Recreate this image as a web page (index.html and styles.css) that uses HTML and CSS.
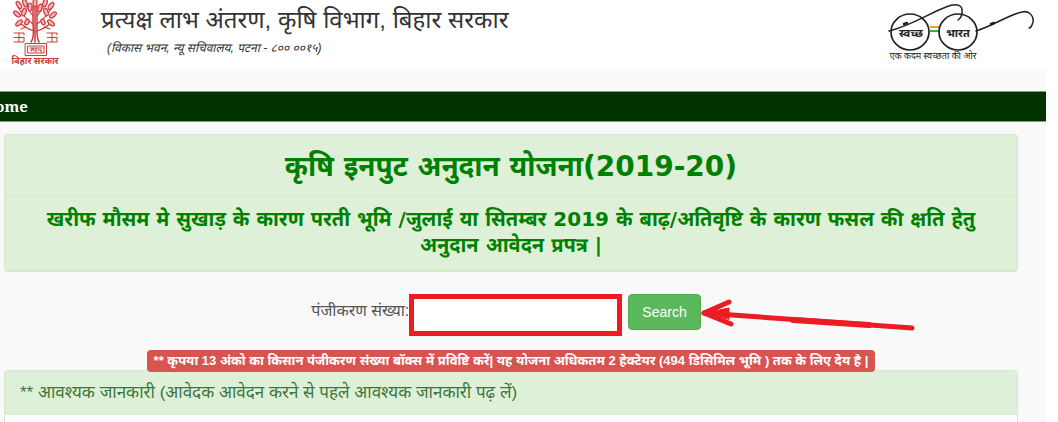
FILE: index.html
```html
<!DOCTYPE html>
<html lang="hi">

<head>
    <meta charset="UTF-8" />
    <title>प्रत्यक्ष लाभ अंतरण, कृषि विभाग, बिहार सरकार</title>
    <link rel="stylesheet" href="styles.css">
</head>

<body>

    <div class="page">
        <header class="header">
            <svg class="emblem" width="50" height="69" viewBox="0 0 50 69" role="img" aria-label="बिहार सरकार">
                <g fill="none" stroke="#cf3a3a" stroke-linecap="round">
                    <path d="M20 42C24 37 22 29 22 22V6M28 42C25 37 26 29 26 22V6M24 42V4" stroke-width="1.500" />
                    <path d="M23 31C17 29 12 26 8 22M22 24C16 20 11 14 7 7M22 16C18 11 15 6 14 0M26 31C32 29 37 26 41 22M26 24C32 20 37 14 41 7M26 16C30 11 33 6 34 0M15 27L10 29M33 27L39 29" stroke-width="1.200" />
                    <path d="M3 33H8V42H3M3 37.500H13M8 42H13V38M8 33H13V35M36 33H41V42H36M36 37.500H46M41 42H46V38M41 33H46V35" stroke-width="1" />
                    <path d="M14.500 43.500H35.500V55.500H14.500ZM17 46H33V53H17Z" stroke-width="1" />
                    <path d="M19 48H31M20 51C21 48 23 49 23 51M25 48V52M27 50H30V52" stroke-width="1.200" />
                </g>
                <g fill="#f3b5b5" stroke="#cf3a3a" stroke-width="1.200">
                    <ellipse cx="8" cy="5" rx="2" ry="4" transform="rotate(-35 8 5)" />
                    <ellipse cx="6" cy="14" rx="2" ry="4" transform="rotate(-50 6 14)" />
                    <ellipse cx="8" cy="23" rx="2" ry="4" transform="rotate(50 8 23)" />
                    <ellipse cx="14" cy="3" rx="2" ry="4" transform="rotate(-20 14 3)" />
                    <ellipse cx="13" cy="12" rx="2" ry="4" transform="rotate(20 13 12)" />
                    <ellipse cx="16" cy="22" rx="2" ry="3" transform="rotate(25 16 22)" />
                    <ellipse cx="19" cy="7" rx="2" ry="4" />
                    <ellipse cx="24" cy="3" rx="2" ry="4" />
                    <ellipse cx="29" cy="8" rx="2" ry="4" transform="rotate(15 29 8)" />
                    <ellipse cx="34" cy="3" rx="2" ry="4" transform="rotate(20 34 3)" />
                    <ellipse cx="35" cy="12" rx="2" ry="4" transform="rotate(-20 35 12)" />
                    <ellipse cx="32" cy="22" rx="2" ry="3" transform="rotate(-25 32 22)" />
                    <ellipse cx="40" cy="6" rx="2" ry="4" transform="rotate(35 40 6)" />
                    <ellipse cx="42" cy="15" rx="2" ry="4" transform="rotate(50 42 15)" />
                    <ellipse cx="40" cy="23" rx="2" ry="4" transform="rotate(-50 40 23)" />
                </g>
                <text class="emblem-text" x="24" y="64" text-anchor="middle">बिहार सरकार</text>
            </svg>

            <div class="titles">
                <h1 class="site-title">प्रत्यक्ष लाभ अंतरण, कृषि विभाग, बिहार सरकार</h1>
                <p class="address">(विकास भवन, न्यू सचिवालय, पटना - ८०० ००१५)</p>
            </div>

            <svg class="glasses" width="154" height="66" viewBox="0 0 154 66" role="img" aria-label="स्वच्छ भारत">
                <path d="M50 27H59" stroke="#e3a52b" stroke-width="2" />
                <path d="M50 31H59" stroke="#3fae49" stroke-width="2" />
                <g fill="none" stroke="#222" stroke-linecap="round">
                    <ellipse cx="30" cy="32" rx="19" ry="18" stroke-width="1.700" />
                    <ellipse cx="78" cy="32" rx="19" ry="18" stroke-width="1.700" />
                    <path d="M9 31C30 26 50 13 66 7C78 2 83 6 82 12C82 16 81 18 78 20" stroke-width="1.500" />
                    <path d="M96 31C115 25 128 15 142 12C150 10 154 17 153 22C152 26 151 28 149 28" stroke-width="1.500" />
                    <path d="M24 24L27 23M111 24L114 23" stroke-width="2.500" />
                </g>
                <text class="lens-text" x="31" y="37" text-anchor="middle">स्वच्छ</text>
                <text class="lens-text" x="78" y="37" text-anchor="middle">भारत</text>
                <text class="motto-text" x="53" y="59" text-anchor="middle">एक कदम स्वच्छता की ओर</text>
            </svg>
        </header>

        <nav class="navbar">
            <a class="nav-link" href="#">Home</a>
        </nav>

        <main class="content">
            <section class="scheme">
                <h2 class="scheme-title">कृषि इनपुट अनुदान योजना(2019-20)</h2>
                <p class="scheme-text">खरीफ मौसम मे सुखाड़ के कारण परती भूमि /जुलाई या सितम्बर 2019 के बाढ़/अतिवृष्टि के कारण फसल की क्षति हेतु अनुदान आवेदन प्रपत्र |</p>
            </section>

            <form class="search">
                <label class="search-label" for="regno">पंजीकरण संख्या:</label>
                <input class="search-input" id="regno" type="text">
                <div class="search-action">
                    <button class="search-button" type="button">Search</button>
                    <svg class="arrow" width="220" height="40" viewBox="0 0 220 40" aria-hidden="true">
                        <g fill="none" stroke="#ed1c24" stroke-width="5" stroke-linecap="round" stroke-linejoin="round">
                            <path d="M28 8L3 19L30 30" />
                            <path d="M3 19L211 34" />
                            <path d="M3 19L28 14V25Z" fill="#ed1c24" stroke-width="1" />
                            <path d="M92 26L168 31" stroke-width="6" />
                        </g>
                    </svg>
                </div>
            </form>

            <div class="notice-row">
                <span class="notice">** कृपया 13 अंको का किसान पंजीकरण संख्या बॉक्स में प्रविष्टि करें| यह योजना अधिकतम 2 हेक्टेयर (494 डिसिमिल भूमि ) तक के लिए देय है |</span>
            </div>

            <section class="info">
                <h3 class="info-title">** आवश्यक जानकारी (आवेदक आवेदन करने से पहले आवश्यक जानकारी पढ़ लें)</h3>
            </section>
        </main>
    </div>

</body>

</html>
```
FILE: styles.css
```css
* {
    box-sizing: border-box;
}

body {
    margin: 0;
    padding-right: 12px;
    background: #fff;
    font-family: "Liberation Sans", "Noto Sans Devanagari", "Noto Sans", sans-serif;
}

h1,
h2,
h3,
p {
    margin: 0;
}

.page {
    display: flex;
    flex-direction: column;
    min-height: 100vh;
    background: #f9f9f9;
    overflow: hidden;
}

.header {
    display: flex;
    align-items: flex-start;
    padding: 0 12px 0 11px;
    background: #fff;
}

.emblem,
.glasses {
    display: block;
}

.titles {
    flex: 1;
    padding: 4px 0 0 40px;
    white-space: nowrap;
}

.site-title {
    font-size: 24px;
    line-height: 32px;
    font-weight: normal;
    color: #333;
}

.address {
    padding-left: 6px;
    font-size: 12px;
    line-height: 24px;
    font-style: italic;
    color: #333;
}

.emblem-text {
    font-size: 9px;
    font-weight: bold;
    fill: #cf3a3a;
}

.lens-text {
    font-size: 11px;
    font-weight: bold;
    fill: #222;
}

.motto-text {
    font-size: 9px;
    fill: #222;
}

.navbar {
    margin-top: 22px;
    background: #003300;
    border-top: 1px solid #8a9a8a;
    border-bottom: 1px solid #8a9a8a;
}

/* the menu starts a little outside the visible area */
.nav-link {
    display: block;
    margin-left: -17px;
    font-family: "Noto Serif", "Liberation Serif", serif;
    font-size: 15px;
    line-height: 29px;
    font-weight: bold;
    color: #fff;
    text-decoration: none;
}

.content {
    display: flex;
    flex-direction: column;
    flex: 1;
    padding: 12px 28px 0 4px;
}

.scheme {
    background: #dff0d8;
    border: 1px solid #d6e9c6;
    border-bottom-width: 2px;
    border-radius: 4px;
    color: #008000;
    font-family: "DejaVu Sans", "Noto Sans Devanagari", sans-serif;
    font-weight: bold;
    text-align: center;
}

.scheme-title {
    padding-top: 4px;
    font-size: 28px;
    line-height: 56px;
    border-bottom: 1px solid #d6e9c6;
}

.scheme-text {
    padding: 10px 15px 12px;
    font-size: 20px;
    line-height: 26px;
}

.search {
    display: flex;
    justify-content: center;
    margin-top: 22px;
    padding-right: 10px;
}

.search-label {
    font-size: 16px;
    line-height: 34px;
    color: #555;
}

.search-input {
    width: 213px;
    height: 42px;
    padding: 6px 12px;
    background: #fff;
    border: 5px solid #ed1c24;
    font-size: 14px;
}

.search-action {
    position: relative;
    margin-left: 6px;
}

.search-button {
    height: 36px;
    padding: 0 13px;
    background: #5cb85c;
    border: 1px solid #4cae4c;
    border-radius: 4px;
    font-family: "Liberation Sans", sans-serif;
    font-size: 14px;
    color: #fff;
}

.arrow {
    position: absolute;
    left: 100%;
    top: 0;
}

.notice-row {
    display: flex;
    justify-content: center;
    position: relative;
    margin: 14px 0 -2px;
}

.notice {
    padding: 0 7px;
    background: #d9534f;
    border-radius: 4px;
    font-size: 13px;
    line-height: 22px;
    font-weight: bold;
    color: #fff;
    white-space: nowrap;
}

.info {
    flex: 1;
    background: #fff;
    border: 1px solid #d6e9c6;
    border-bottom: 0;
    border-radius: 4px 4px 0 0;
}

.info-title {
    padding: 0 15px;
    background: #dff0d8;
    font-size: 17px;
    line-height: 44px;
    font-weight: normal;
    color: #3c763d;
}
```
